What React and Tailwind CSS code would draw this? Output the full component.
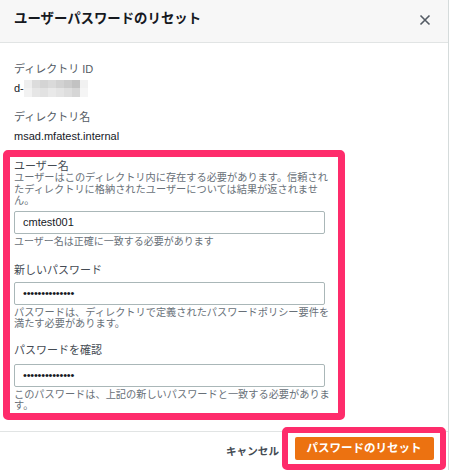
import React from "react";

const font = { fontFamily: '"Liberation Sans", "Noto Sans CJK JP", sans-serif' };

const blurRows = [
  ["#eeeeee", "#dcdcdc", "#d4d4d4", "#dadada", "#d2d2d2", "#cbcbcb", "#c2c2c2", "#f1f1f1"],
  ["#f2f2f2", "#e6e6e6", "#e2e2e2", "#e9e9e9", "#e4e4e4", "#dedede", "#d6d6d6", "#f5f5f5"],
];

const Field = ({ label, children }) => (
  <div>
    <div className="text-[11px] leading-[12px] text-[#444b53]">{label}</div>
    {children}
  </div>
);

const Box = ({ children }) => (
  <div className="w-[311px] h-[23px] border border-[#aab7b8] rounded-[2px] bg-white flex items-center pl-[8px] text-[11px] text-[#16191f]">
    {children}
  </div>
);

const Dots = () => (
  <span className="text-[11px] tracking-[-0.2px] text-[#16191f]">••••••••••••••</span>
);

export default function App() {
  return (
    <div className="w-[450px] h-[470px] bg-white overflow-hidden" style={font}>
      <div className="w-[449px] h-[470px] border-r border-[#d5dbdb] flex flex-col">
        {/* header */}
        <div className="h-[43px] bg-[#f7f7f7] border-b border-[#e1e4e4] flex items-center justify-between pl-[14px] pr-[17px]">
          <div className="text-[13.4px] font-bold text-[#16191f] -mt-[3px]">ユーザーパスワードのリセット</div>
          <svg width="12" height="12" viewBox="0 0 12 12" className="-mt-[2px]">
            <path d="M1.5 1.5 L10.5 10.5 M10.5 1.5 L1.5 10.5" stroke="#545b64" strokeWidth="1.6" />
          </svg>
        </div>

        {/* body */}
        <div className="flex-1 pt-[19px]">
          <div className="pl-[14px]">
            <div className="text-[11px] leading-[14px] text-[#545b64]">ディレクトリ ID</div>
            <div className="mt-[5px] flex items-center text-[11px] leading-[14px] text-[#16191f]">
              <span>d-</span>
              <div className="flex flex-col -my-[2px]">
                {blurRows.map((row, i) => (
                  <div key={i} className="flex">
                    {row.map((c, j) => (
                      <div key={j} className="w-[8px] h-[8.5px]" style={{ background: c }} />
                    ))}
                  </div>
                ))}
              </div>
            </div>
            <div className="mt-[15px] text-[11px] leading-[14px] text-[#545b64]">ディレクトリ名</div>
            <div className="mt-[5px] text-[11px] leading-[14px] text-[#16191f]">msad.mfatest.internal</div>
          </div>

          {/* highlighted form */}
          <div className="ml-[3px] mt-[7px] w-[342px] border-[7px] border-[#fe2c6b] rounded-[5px] pl-[4px] pr-[13px] pt-[3px] pb-[2px]">
            <Field label="ユーザー名">
              <div className="text-[10.2px] leading-[11.5px] text-[#687078] whitespace-nowrap">
                ユーザーはこのディレクトリ内に存在する必要があります。信頼され
                <br />
                たディレクトリに格納されたユーザーについては結果が返されませ
                <br />
                ん。
              </div>
              <div className="mt-[4px]">
                <Box>cmtest001</Box>
              </div>
              <div className="mt-[2.5px] text-[10px] leading-[11px] text-[#687078]">
                ユーザー名は正確に一致する必要があります
              </div>
            </Field>

            <div className="mt-[16.5px]">
              <Field label="新しいパスワード">
                <div className="mt-[6px]">
                  <Box>
                    <Dots />
                  </Box>
                </div>
                <div className="mt-[2.5px] text-[10.2px] leading-[11px] text-[#687078] whitespace-nowrap">
                  パスワードは、ディレクトリで定義されたパスワードポリシー要件を
                  <br />
                  満たす必要があります。
                </div>
              </Field>
            </div>

            <div className="mt-[14.5px]">
              <Field label="パスワードを確認">
                <div className="mt-[8px]">
                  <Box>
                    <Dots />
                  </Box>
                </div>
                <div className="mt-[2.5px] text-[10.2px] leading-[11px] text-[#687078] whitespace-nowrap">
                  このパスワードは、上記の新しいパスワードと一致する必要がありま
                  <br />
                  す。
                </div>
              </Field>
            </div>
          </div>
        </div>

        {/* footer */}
        <div className="h-[39px] border-t border-[#e1e4e4] flex items-start justify-end">
          <div className="mt-[12px] mr-[3px] text-[10.6px] font-bold text-[#444b53]">キャンセル</div>
          <div className="-mt-[5px] mr-[2px] w-[164px] h-[43px] border-[6px] border-[#fe2c6b] rounded-[5px] bg-white flex items-center justify-center">
            <div className="w-[139px] h-[23px] bg-[#ec7211] rounded-[2px] flex items-center justify-center text-[11.5px] font-bold text-white">
              パスワードのリセット
            </div>
          </div>
        </div>
      </div>
    </div>
  );
}
